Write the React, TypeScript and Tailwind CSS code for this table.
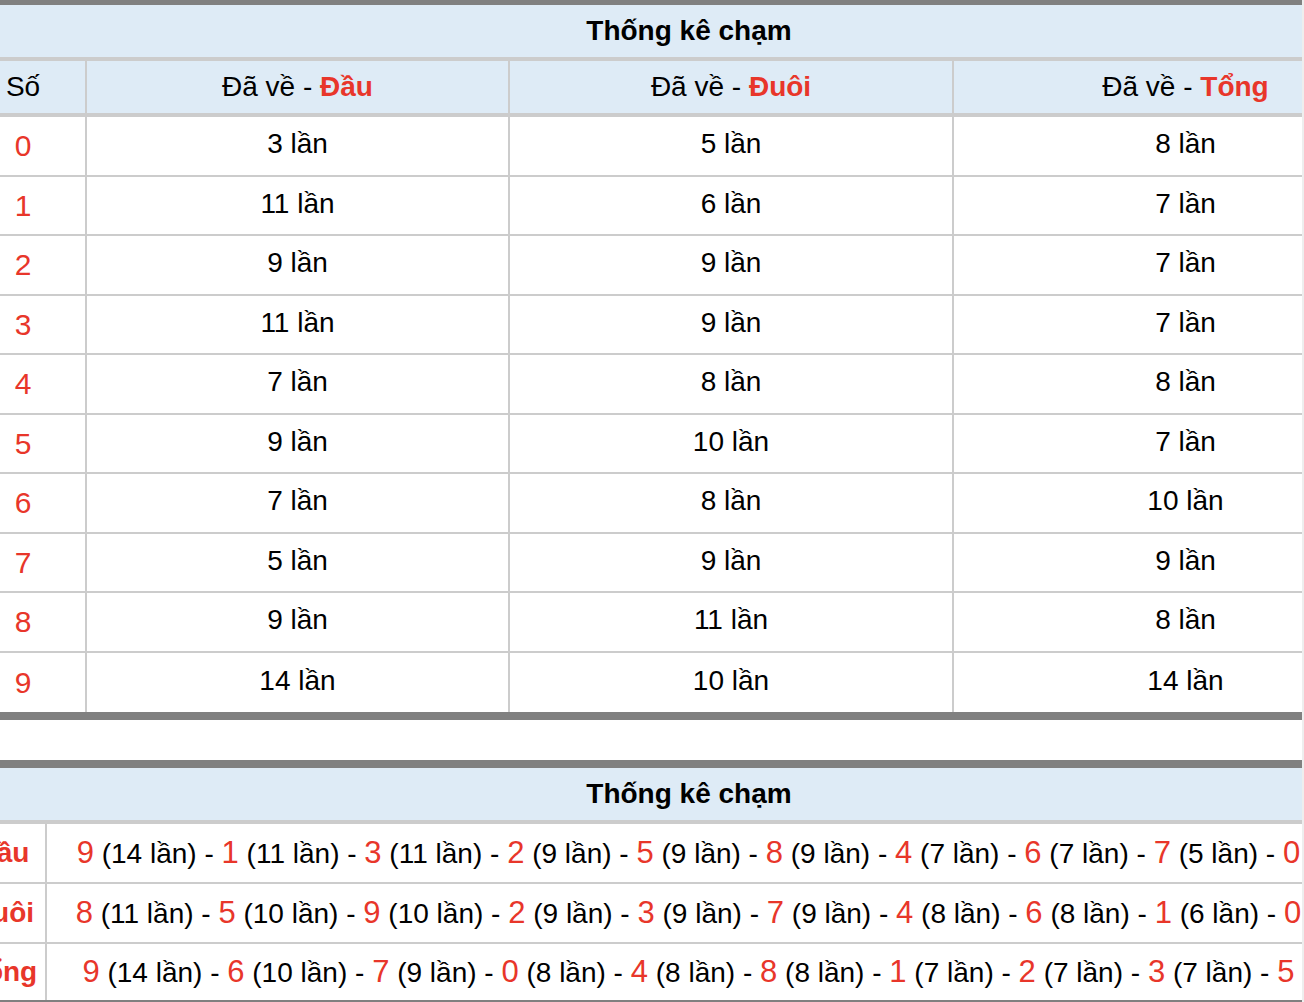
import React from 'react'

const RED = 'text-[#e8362a]'

const dau = [3, 11, 9, 11, 7, 9, 7, 5, 9, 14]
const duoi = [5, 6, 9, 9, 8, 10, 8, 9, 11, 10]
const tong = [8, 7, 7, 7, 8, 7, 10, 9, 8, 14]

const ranking: { label: string; items: [number, number][] }[] = [
  { label: 'Đầu', items: [[9, 14], [1, 11], [3, 11], [2, 9], [5, 9], [8, 9], [4, 7], [6, 7], [7, 5], [0, 3]] },
  { label: 'Đuôi', items: [[8, 11], [5, 10], [9, 10], [2, 9], [3, 9], [7, 9], [4, 8], [6, 8], [1, 6], [0, 5]] },
  { label: 'Tổng', items: [[9, 14], [6, 10], [7, 9], [0, 8], [4, 8], [8, 8], [1, 7], [2, 7], [3, 7], [5, 7]] },
]

function Title() {
  return (
    <div className="h-[56px] bg-[#deebf6] border-b-4 border-[#cccccc] flex items-center justify-center font-bold text-[28px]">
      Thống kê chạm
    </div>
  )
}

export default function App() {
  return (
    <div
      className="relative w-[1304px] h-[1002px] overflow-hidden bg-white text-black"
      style={{ fontFamily: '"Liberation Sans", Arial, sans-serif' }}
    >
      {/* Bảng 1 */}
      <div className="w-[1456px] -ml-[39px] -mt-[3px] border-t-8 border-b-8 border-[#808080]">
        <Title />
        <div className="flex h-[56px] bg-[#deebf6] border-b-4 border-[#cccccc] text-[28px]">
          <div className="w-[126px] border-r-2 border-[#cccccc] flex items-center justify-center">Số</div>
          <div className="w-[423px] border-r-2 border-[#cccccc] flex items-center justify-center">
            Đã về -&nbsp;<b className={RED}>Đầu</b>
          </div>
          <div className="w-[444px] border-r-2 border-[#cccccc] flex items-center justify-center">
            Đã về -&nbsp;<b className={RED}>Đuôi</b>
          </div>
          <div className="flex-1 flex items-center justify-center">
            Đã về -&nbsp;<b className={RED}>Tổng</b>
          </div>
        </div>
        {dau.map((d, i) => (
          <div
            key={i}
            className={`flex h-[59.5px] text-[28px] ${i < 9 ? 'border-b-2 border-[#cccccc]' : ''}`}
          >
            <div className={`w-[126px] border-r-2 border-[#cccccc] flex items-center justify-center text-[30px] ${RED}`}>{i}</div>
            <div className="w-[423px] border-r-2 border-[#cccccc] flex items-center justify-center pb-[3px]">{d} lần</div>
            <div className="w-[444px] border-r-2 border-[#cccccc] flex items-center justify-center pb-[3px]">{duoi[i]} lần</div>
            <div className="flex-1 flex items-center justify-center pb-[3px]">{tong[i]} lần</div>
          </div>
        ))}
      </div>

      {/* Bảng 2 */}
      <div className="w-[1456px] -ml-[39px] mt-[40px] border-t-8 border-b-8 border-[#808080]">
        <Title />
        {ranking.map((r, i) => (
          <div
            key={r.label}
            className={`flex text-[28px] ${i < 2 ? 'h-[60px] border-b-2 border-[#cccccc]' : 'h-[56px]'}`}
          >
            <div className={`w-[86px] border-r-2 border-[#cccccc] flex items-center justify-center font-bold ${RED}`}>
              {r.label}
            </div>
            <div className="flex-1 flex items-center justify-center whitespace-nowrap">
              <span>
                {r.items.map(([n, c], j) => (
                  <React.Fragment key={j}>
                    {j > 0 && ' - '}
                    <span className={`text-[31px] ${RED}`}>{n}</span> ({c} lần)
                  </React.Fragment>
                ))}
              </span>
            </div>
          </div>
        ))}
      </div>

      <div className="absolute right-0 top-0 h-full w-[2px] bg-[#eeeeee]" />
    </div>
  )
}
